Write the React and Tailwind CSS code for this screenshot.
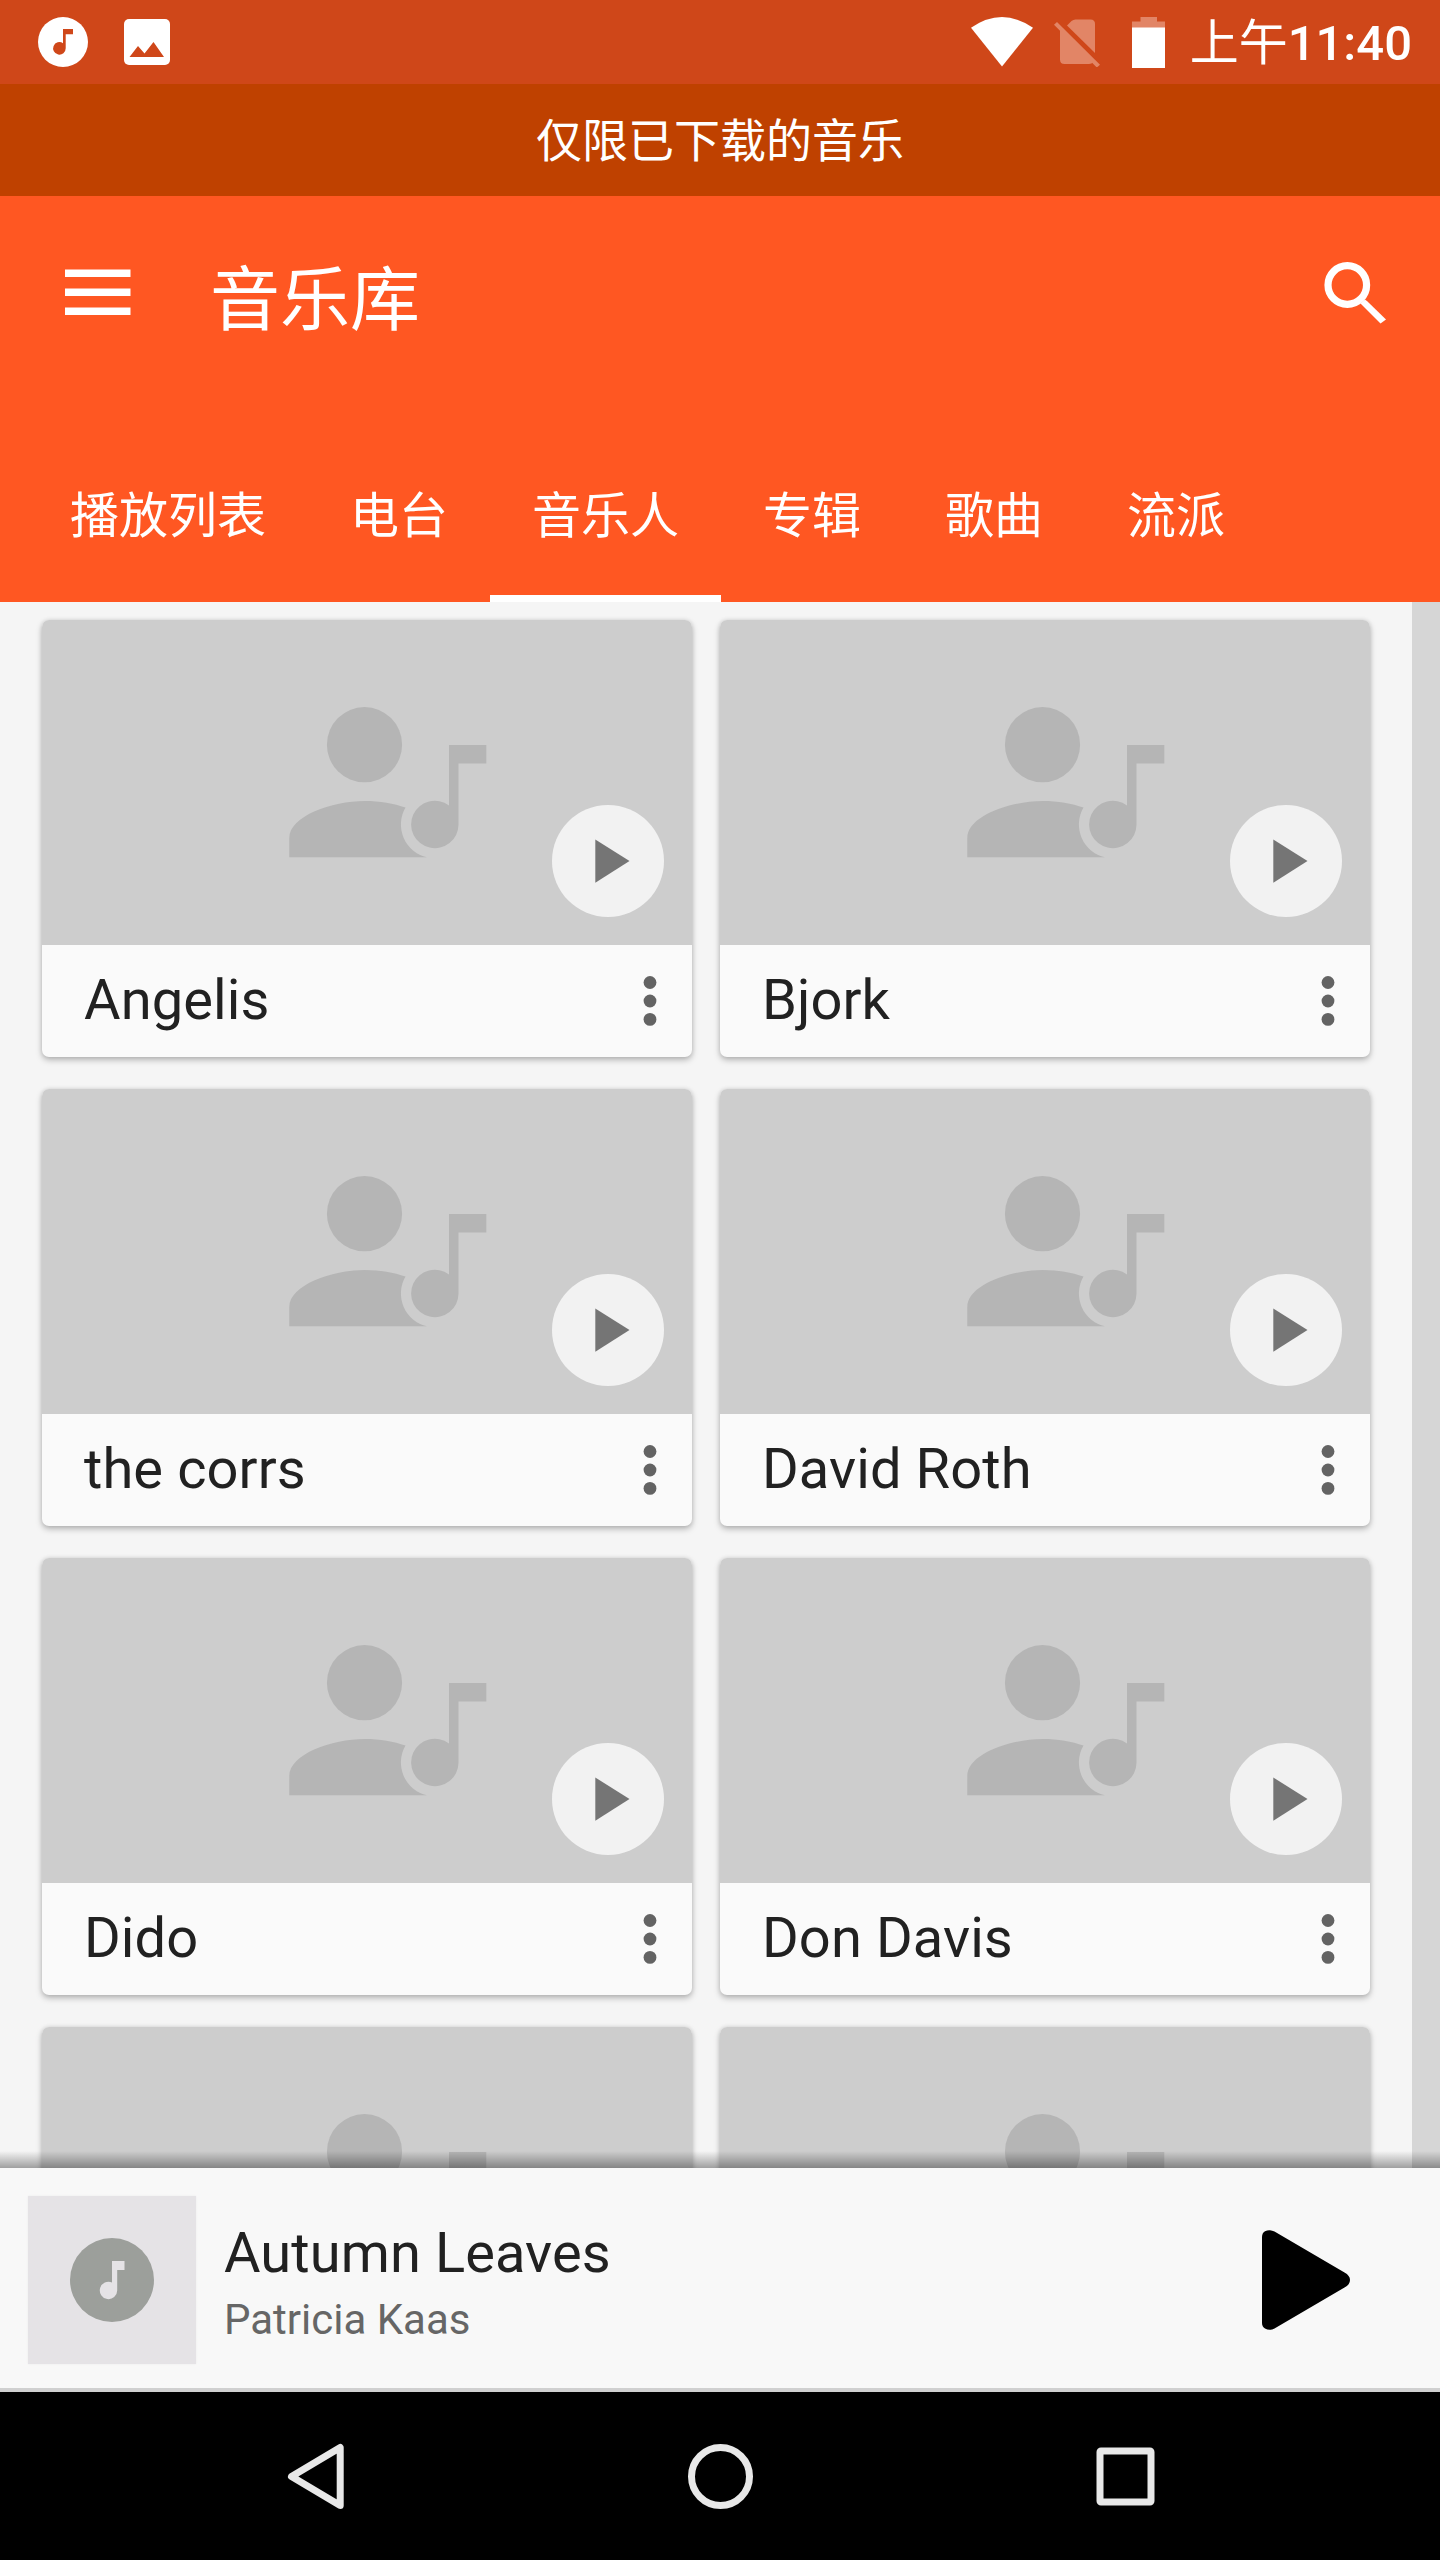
const artists = ["Angelis", "Bjork", "the corrs", "David Roth", "Dido", "Don Davis", "", ""];
const tabs = ["播放列表", "电台", "音乐人", "专辑", "歌曲", "流派"];

function StatusBar() {
  return (
    <div className="flex h-[84px] shrink-0 items-center bg-[#cf4719] pr-[28px] pl-[38px] text-white">
      <svg className="size-[50px]" viewBox="0 0 50 50">
        <circle cx="25" cy="25" r="25" fill="#fff" />
        <path d="M25 12h10v5.300h-7.300v14a6.300 6.300 0 1 1-2.700-5.100z" fill="#cf4719" />
      </svg>
      <svg className="ml-[36px] size-[46px]" viewBox="0 0 46 46">
        <rect width="46" height="46" rx="5" fill="#fff" />
        <path d="M5.500 38 14 27l6.500 7.500L29.500 23 40 38z" fill="#cf4719" />
      </svg>
      <div className="flex-1" />
      <svg className="h-[50px] w-[62px]" viewBox="0 0 62 50">
        <path d="M0 10.800Q31 -10.800 62 10.800L31 49.500z" fill="#fff" />
      </svg>
      <svg className="ml-[21px] h-[50px] w-[46px]" viewBox="0 0 46 50">
        <g fill="#e28566">
          <path d="M13 8.500l4.500-4.500q1.700-1.500 4-1.500h15q4.500 0 4.500 4.500v29z" />
          <path d="M6 12 39 45q-1 2-4 2H10.500Q6 47 6 42.500z" />
          <path d="M3 5 46 47.800 42.800 50.500 0 7.700z" />
        </g>
      </svg>
      <svg className="ml-[32px] h-[52px] w-[33px]" viewBox="0 0 33 52">
        <path d="M8.500 1H25v4.500h8V12H0V5.500h8.500z" fill="#e28566" />
        <path d="M0 11.500h33V52H0z" fill="#fff" />
      </svg>
      <span className="ml-[25px] pt-[4px] text-[49px] leading-[80px] font-medium whitespace-nowrap">
        <span className="font-normal">上午</span>11:40
      </span>
    </div>
  );
}

function Header() {
  return (
    <header className="flex h-[406px] shrink-0 flex-col bg-[#ff5722] text-white">
      <div className="flex h-[196px] items-center pr-[52px] pl-[65px]">
        <svg className="size-[66px]" viewBox="0 0 66 66" fill="#fff">
          <path d="M0 8.500h65.500v7.500H0zM0 27.500h65.500V35H0zM0 46.500h65.500V54H0z" />
        </svg>
        <h1 className="ml-[79px] flex-1 pt-[13px] text-[70px] leading-[90px] font-normal">音乐库</h1>
        <svg className="size-[66px]" viewBox="0 0 66 66">
          <circle cx="25.300" cy="24" r="19.300" fill="none" stroke="#fff" strokeWidth="7.200" />
          <path d="M38.500 42.500 43 38.500 45.500 40.500 64 58.500 58.500 62.500 41 45z" fill="#fff" />
        </svg>
      </div>
      <nav className="flex h-[210px] items-end pl-[28px]">
        {tabs.map((tab, i) => (
          <div
            key={tab}
            className={`flex h-[168px] items-center border-b-[7px] px-[42px] pt-[4px] text-[49px] whitespace-nowrap ${i === 2 ? "border-white" : "border-transparent"}`}
          >
            {tab}
          </div>
        ))}
      </nav>
    </header>
  );
}

function ArtistCard({ name }) {
  return (
    <article className="h-[437px] overflow-hidden rounded-[7px] bg-[#fafafa] shadow-[0_3px_6px_rgba(0,0,0,0.26),0_0_4px_rgba(0,0,0,0.1)]">
      <div className="relative h-[325px] bg-[#cdcdcd]">
        <svg className="h-[325px] w-[650px]" viewBox="0 0 650 325" fill="#b5b5b5">
          <circle cx="322.500" cy="124.700" r="37.600" />
          <path d="M247.300 237.300V218C247.300 196 290 181 322.500 181 338 181 352 183.500 363.500 187.600A33.600 33.600 0 0 0 385 237.300z" />
          <path d="M407 125h37.300v18.500h-27.800v61.200a23.700 23.700 0 1 1-9.500-19.200z" />
        </svg>
        <button className="absolute right-[28px] bottom-[28px] flex size-[112px] items-center justify-center rounded-full bg-[#f2f2f2]">
          <svg className="size-[112px]" viewBox="0 0 112 112">
            <path d="M43.300 34.500 77.500 56 43.300 77.700z" fill="#757575" />
          </svg>
        </button>
      </div>
      <div className="flex h-[112px] items-center justify-between pr-[35px] pl-[42px]">
        <span className="pb-[3px] text-[56px] leading-[66px] tracking-[0.1px] text-[#212121]">{name}</span>
        <svg className="h-[56px] w-[14px]" viewBox="0 0 14 56" fill="#636363">
          <circle cx="7" cy="9.500" r="6.400" />
          <circle cx="7" cy="28" r="6.400" />
          <circle cx="7" cy="46.400" r="6.400" />
        </svg>
      </div>
    </article>
  );
}

function Player() {
  return (
    <footer className="flex h-[224px] shrink-0 items-center border-b-4 border-[#d0d0d0] bg-[#f8f8f8] pt-[4px] pr-[90px] pl-[28px]">
      <div className="flex size-[168px] items-center justify-center bg-[#e5e3e6] shadow-[0_0_2px_rgba(0,0,0,0.06)]">
        <svg className="size-[84px]" viewBox="0 0 84 84">
          <circle cx="42" cy="42" r="42" fill="#9c9f9b" />
          <path d="M42 23h12.500v9h-7.300v20.500a8.700 8.700 0 1 1-5.200-8z" fill="#e5e3e6" />
        </svg>
      </div>
      <div className="ml-[28px] flex-1 pt-[3px]">
        <div className="text-[56px] leading-[66px] tracking-[0.1px] text-[#212121]">Autumn Leaves</div>
        <div className="mt-[9px] text-[42px] leading-[49px] text-[#666]">Patricia Kaas</div>
      </div>
      <svg className="h-[100px] w-[88px]" viewBox="0 0 88 100">
        <path d="M0 7Q0 3 3 1.200 7.500-1 12.500 1.500L82.500 42.500Q88 45.500 88 50T82.500 57.500L12.500 98.500Q7.500 101 3 98.500 0 96.500 0 93z" />
      </svg>
    </footer>
  );
}

function NavigationBar() {
  return (
    <div className="flex h-[168px] shrink-0 items-center justify-between bg-black pr-[274px] pl-[276px]">
      <svg className="size-[80px]" viewBox="0 0 80 80" fill="none" stroke="#e8e8e8" strokeWidth="7" strokeLinejoin="round">
        <path d="M64.200 11.500V69.500L15.500 40.500z" />
      </svg>
      <svg className="size-[80px]" viewBox="0 0 80 80" fill="none" stroke="#e8e8e8" strokeWidth="7">
        <circle cx="39.500" cy="40.500" r="29" />
      </svg>
      <svg className="size-[80px]" viewBox="0 0 80 80" fill="none" stroke="#e8e8e8" strokeWidth="7">
        <rect x="14" y="15" width="51" height="51" rx="1" />
      </svg>
    </div>
  );
}

export default function App() {
  return (
    <div className="flex h-[2560px] w-[1440px] flex-col overflow-hidden bg-[#f5f5f5] font-[Roboto,'Noto_Sans_CJK_SC',sans-serif]">
      <StatusBar />
      <div className="flex h-[112px] shrink-0 items-center justify-center bg-[#bf4100] pt-[3px] text-[46px] text-white">
        仅限已下载的音乐
      </div>
      <Header />
      <main className="relative flex h-[1566px] shrink-0 overflow-hidden">
        <div className="grid flex-1 auto-rows-[437px] grid-cols-[650px_650px] gap-x-[28px] gap-y-[32px] pt-[18px] pl-[42px]">
          {artists.map((name, i) => (
            <ArtistCard key={i} name={name} />
          ))}
        </div>
        <div className="w-[28px] bg-[#d6d6d6]" />
        <div className="absolute inset-x-0 bottom-0 h-[17px] bg-linear-to-b from-transparent to-black/35" />
      </main>
      <Player />
      <NavigationBar />
    </div>
  );
}
